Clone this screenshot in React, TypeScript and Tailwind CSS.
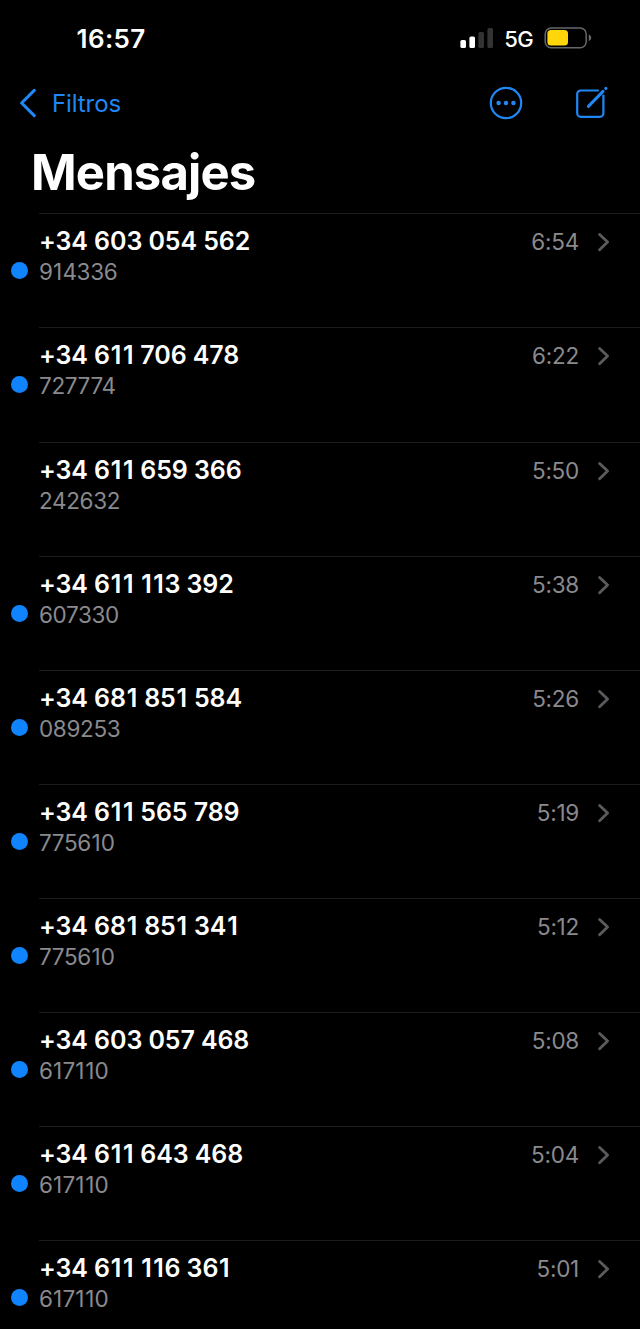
type Message = { phone: string; preview: string; time: string; unread: boolean };

const messages: Message[] = [
  { phone: "+34 603 054 562", preview: "914336", time: "6:54", unread: true },
  { phone: "+34 611 706 478", preview: "727774", time: "6:22", unread: true },
  { phone: "+34 611 659 366", preview: "242632", time: "5:50", unread: false },
  { phone: "+34 611 113 392", preview: "607330", time: "5:38", unread: true },
  { phone: "+34 681 851 584", preview: "089253", time: "5:26", unread: true },
  { phone: "+34 611 565 789", preview: "775610", time: "5:19", unread: true },
  { phone: "+34 681 851 341", preview: "775610", time: "5:12", unread: true },
  { phone: "+34 603 057 468", preview: "617110", time: "5:08", unread: true },
  { phone: "+34 611 643 468", preview: "617110", time: "5:04", unread: true },
  { phone: "+34 611 116 361", preview: "617110", time: "5:01", unread: true },
];

// Gives the narrow digit 1 a little more room than its neighbours.
function Digits({ value, oneClass }: { value: string; oneClass: string }) {
  return (
    <>
      {value.split(/(1)/).map((part, i) =>
        part === "1" ? (
          <span key={i} className={oneClass}>
            1
          </span>
        ) : (
          part
        ),
      )}
    </>
  );
}

function StatusBar() {
  return (
    <div className="flex h-[76px] shrink-0 items-center justify-between pl-[76.5px] pr-12">
      <span className="mt-[2px] text-[26px] font-semibold leading-8 tracking-[0.4px]">16:57</span>
      <div className="flex items-center">
        <svg width="34" height="22" viewBox="0 0 34 22" className="mr-[10px]">
          <rect x="0.4" y="13" width="5.6" height="8" rx="1.6" fill="#fff" />
          <rect x="9.4" y="9.4" width="5.6" height="11.6" rx="1.6" fill="#fff" />
          <rect x="18.4" y="5" width="5.6" height="16" rx="1.6" fill="#333" />
          <rect x="27.4" y="1" width="5.6" height="20" rx="1.6" fill="#333" />
        </svg>
        <span className="mr-[11px] mt-[2px] text-[22px] font-medium leading-7 tracking-[-0.6px]">5G</span>
        <svg width="48" height="22" viewBox="0 0 48 22">
          <rect x="1.2" y="0.9" width="41" height="19.8" rx="6" fill="none" stroke="#68686b" strokeWidth="1.5" />
          <rect x="3.4" y="3" width="20.6" height="15.6" rx="3.6" fill="#ffd60a" />
          <path d="M44.8 7.6c1.5.6 2.4 1.8 2.4 3.2s-.9 2.6-2.4 3.2z" fill="#68686b" />
        </svg>
      </div>
    </div>
  );
}

function NavBar() {
  return (
    <div className="flex h-[54px] shrink-0 items-center justify-between pl-[18px] pr-[32px] text-[#1f88f5]">
      <button className="flex items-center gap-[15px]">
        <svg width="19" height="30" viewBox="0 0 19 30" fill="none" stroke="currentColor" strokeWidth="3.1" strokeLinecap="round" strokeLinejoin="round">
          <path d="M16.3 2.4 3.6 15l12.7 12.6" />
        </svg>
        <span className="mt-[2px] text-[24px] leading-8 tracking-[-0.1px]">Filtros</span>
      </button>
      <div className="flex items-center gap-[51px]">
        <svg width="34" height="34" viewBox="0 0 34 34">
          <circle cx="17" cy="17" r="15.2" fill="none" stroke="currentColor" strokeWidth="2.2" />
          <circle cx="9.6" cy="17" r="2.2" fill="currentColor" />
          <circle cx="17" cy="17" r="2.2" fill="currentColor" />
          <circle cx="24.4" cy="17" r="2.2" fill="currentColor" />
        </svg>
        <svg width="34" height="34" viewBox="0 0 34 34" fill="none" stroke="currentColor" strokeLinecap="round" strokeLinejoin="round">
          <path d="M24 4.5H6.8a3.6 3.6 0 0 0-3.6 3.6v19.2a3.6 3.6 0 0 0 3.6 3.6h19a3.6 3.6 0 0 0 3.6-3.6V9.6" strokeWidth="2.2" />
          <path d="M14.4 20.4 29 5.4" strokeWidth="3" />
          <path d="M31.8 2.5l.1-.1" strokeWidth="3" />
        </svg>
      </div>
    </div>
  );
}

function MessageRow({ message }: { message: Message }) {
  return (
    <li className="flex h-[114.13px] shrink-0 pl-[10.5px]">
      <div className="w-[28.5px] pt-[49px]">
        {message.unread && <div className="h-[17px] w-[17px] rounded-full bg-[#0f84fe]" />}
      </div>
      <div className="flex flex-1 items-start justify-between border-t border-[#1c1c1e] pr-[30px]">
        <div className="pt-[12px]">
          <div className="text-[25px] font-semibold leading-[30px] tracking-[-0.1px]">
            <Digits value={message.phone} oneClass="px-[0.8px]" />
          </div>
          <div className="mt-px text-[22.5px] leading-[30px] tracking-[-0.35px] text-[#8a8a8e]">
            <Digits value={message.preview} oneClass="px-[0.5px]" />
          </div>
        </div>
        <div className="flex items-center gap-[18px] pt-[13px]">
          <span className="text-[22.5px] leading-[30px] tracking-[-0.25px] text-[#8a8a8e]">{message.time}</span>
          <svg width="13" height="20" viewBox="0 0 13 20" fill="none" stroke="#5b5b5f" strokeWidth="2.8" strokeLinecap="round" strokeLinejoin="round">
            <path d="M2.6 2.4 10.6 10l-8 7.8" />
          </svg>
        </div>
      </div>
    </li>
  );
}

export default function App() {
  return (
    <div className="flex h-[1329px] w-[640px] flex-col overflow-hidden bg-black font-['Inter',sans-serif] text-white">
      <StatusBar />
      <NavBar />
      <h1 className="h-[83.35px] shrink-0 pl-[31px] pt-[13px] text-[49px] font-bold leading-[60px] tracking-[-0.85px]">Mensajes</h1>
      <ul className="flex flex-col">
        {messages.map((message) => (
          <MessageRow key={message.phone} message={message} />
        ))}
      </ul>
    </div>
  );
}
